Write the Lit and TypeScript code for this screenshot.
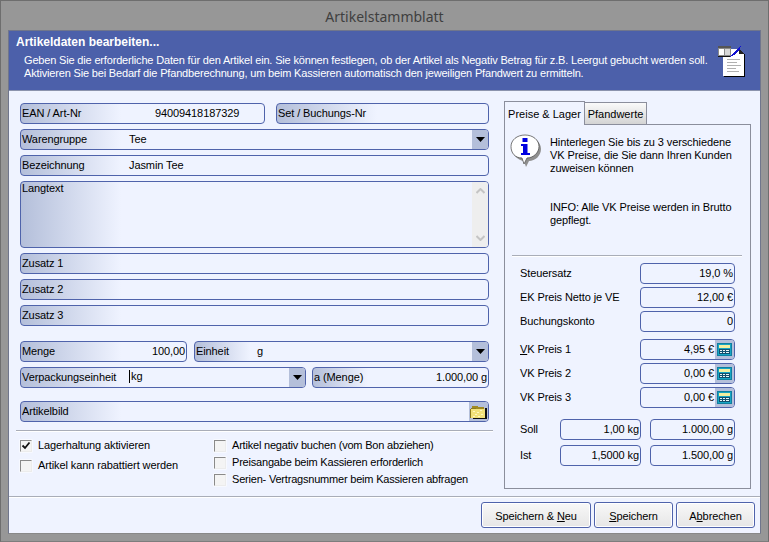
import { LitElement, html, css, svg } from "lit";
import { customElement } from "lit/decorators.js";

const caret = html`<span class="dd"><svg width="9" height="5" viewBox="0 0 9 5"><path d="M0 0h9L4.5 5z" fill="#000"/></svg></span>`;

const calc = html`<span class="btnicon"><svg width="15" height="13" viewBox="0 0 15 13" shape-rendering="crispEdges">
  <rect x="0" y="0" width="15" height="13" fill="#0f7f9f"/>
  <rect x="1" y="1" width="13" height="11" fill="#17a5c4"/>
  <rect x="2" y="2" width="11" height="3" fill="#f4f0a0"/>
  <rect x="2" y="6" width="11" height="5" fill="#12506e"/>
  <path d="M3 7h2v1H3zM6 7h2v1H6zM9 7h3v1H9zM3 9h2v1H3zM6 9h2v1H6zM9 9h3v1H9z" fill="#e8f4f4"/>
</svg></span>`;

const folder = html`<span class="btnicon"><svg width="17" height="14" viewBox="0 0 17 14" shape-rendering="crispEdges">
  <path d="M2 1h5l1 1h6v4H2z" fill="#a08a20"/>
  <path d="M1 4h14v9H1z" fill="#f2e27a"/>
  <path d="M0 4h1v9H0zM1 3h5v1H1z" fill="#8a7a1c"/>
  <path d="M3 6h2v1H3zM7 7h2v1H7zM10 5h2v1h-2zM5 9h2v1H5zM11 9h2v1h-2zM3 11h2v1H3zM8 11h2v1H8z" fill="#fff8c0"/>
  <path d="M15 3h2v11H3v-1h12z" fill="#111"/>
</svg></span>`;

const info = svg`<svg class="infoicon" width="32" height="33" viewBox="0 0 32 33">
  <path d="M17 3c8 0 14 5 14 12s-6 12-12 12l-3 6-2-6C7 26 3 21 3 15S9 3 17 3z" fill="#8f8f8f"/>
  <path d="M15 1c8 0 14 5 14 11.500S23 24 17 24l-3 6-2-6C5 24 1 19 1 12.500S7 1 15 1z" fill="#fff" stroke="#555" stroke-width="0.8"/>
  <rect x="12.500" y="4" width="5" height="4" fill="#0000e0"/>
  <path d="M11 10h6.500v9H20v2h-9v-2h2v-7h-2z" fill="#0000e0"/>
</svg>`;

const doc = svg`<svg width="30" height="32" viewBox="0 0 30 32" shape-rendering="crispEdges">
  <path d="M6 5h16l5 5v22H6z" fill="#000"/>
  <path d="M5 4h16l5 5v22H5z" fill="#fff"/>
  <path d="M21 4h1v1h1v1h1v1h1v1h1v1h-5z" fill="#222"/>
  <path d="M9 14h13v1H9zM9 17h10v1H9zM9 20h14v1H9zM9 23h9v1H9zM9 26h12v1H9z" fill="#b0b0b0"/>
  <rect x="0" y="1" width="13" height="11" fill="#8a8a8a"/>
  <rect x="0" y="1" width="13" height="2" fill="#555"/>
  <rect x="1" y="4" width="5" height="6" fill="#fff"/>
  <rect x="7" y="4" width="5" height="6" fill="#d8d8d8"/>
  <rect x="0" y="11" width="13" height="1" fill="#111"/>
  <path d="M12 11l2-1 1-2 2-2 2-2 2-2 2-1-1 3-2 2-2 2-2 2-2 1-2 1z" fill="#1010d0"/>
</svg>`;

@customElement("app-root")
export class AppRoot extends LitElement {
  static styles = css`
    :host { display: block; width: 769px; height: 542px; box-sizing: border-box; background: #979797;
      border: 1px solid #6e6e6e; border-bottom-color: #7d7d7d; font: 11px "Liberation Sans", Arial, sans-serif; letter-spacing: -.1px; color: #000; overflow: hidden; }
    .title { height: 29px; display: flex; align-items: center; justify-content: center; font: 14px "Noto Sans", sans-serif; letter-spacing: 0; color: #3f3f3f; padding-top: 1px; box-sizing: border-box; }
    .win { margin: 0 7px; height: 504px; box-sizing: border-box; background: #eff3ff; border: 1px solid #70768c; border-bottom-color: #888; display: flex; flex-direction: column; }
    .head { height: 60px; flex: none; box-sizing: border-box; background: #4c60aa; border-bottom: 1px solid #8b93ad; color: #fff; position: relative; padding: 4px 0 0 7px; }
    .head b { display: block; line-height: 14px; font-size: 12px; letter-spacing: 0; }
    .head p { margin: 5px 0 0 8px; line-height: 13px; white-space: nowrap; letter-spacing: -.17px; }
    .head .ic { position: absolute; right: 12px; top: 14px; display: block; }
    .main { flex: 1; display: flex; padding: 12px 0 0 11px; min-height: 0; }
    .left { width: 469px; display: flex; flex-direction: column; gap: 5px; flex: none; }
    .row { display: flex; justify-content: space-between; }
    .mt10 { margin-top: 10px; }
    .mt8 { margin-top: 8px; }
    .f { height: 21px; box-sizing: border-box; display: flex; align-items: center; border: 1px solid #4f63ab; border-radius: 4px; background: linear-gradient(90deg, #b4bfda 0, #eff3ff 100px) no-repeat; overflow: hidden; white-space: nowrap; flex: none; }
    .f.short { background-image: linear-gradient(90deg, #b4bfda 0, #eff3ff 55px); }
    .f.plain { background: #eff3ff; justify-content: flex-end; }
    .w245 { width: 245px; }
    .w213 { width: 213px; }
    .w167 { width: 167px; }
    .w295 { width: 295px; }
    .w286 { width: 286px; }
    .w177 { width: 177px; }
    .lb { padding: 0 0 2px 1px; flex: none; }
    .val { flex: 1; padding-bottom: 2px; }
    .val.r { text-align: right; padding-right: 1px; }
    .dd { width: 16px; height: 100%; flex: none; background: #b4bfda; display: flex; align-items: center; justify-content: center; }
    .btnicon { width: 19px; height: 100%; flex: none; background: #b4bfda; display: flex; align-items: center; justify-content: center; }
    .lw { width: 107px; }
    .lw133 { width: 133px; }
    .lw61 { width: 61px; }
    .cursor { display: inline-block; width: 1px; height: 13px; background: #000; margin-right: 1px; vertical-align: -3px; }
    .long { height: 67px; align-items: flex-start; }
    .long .lb { padding: 0 0 0 1px; flex: 1; }
    .sb { width: 16px; height: 100%; background: #eeeeee; flex: none; display: flex; flex-direction: column; justify-content: space-between; align-items: center; padding: 6px 0 6px; box-sizing: border-box; }
    .sep { height: 1px; background: #a9adb8; margin: 3px -4px 0; border-bottom: 1px solid #fff; }
    .checks { display: flex; margin-top: 1px; }
    .c1 { width: 194px; flex: none; display: flex; flex-direction: column; gap: 7px; padding-top: 1px; }
    .c2 { display: flex; flex-direction: column; gap: 4px; padding-top: 1px; letter-spacing: -.2px; }
    .ck { display: flex; align-items: center; height: 13px; gap: 6px; white-space: nowrap; }
    .ck span:last-child { padding-bottom: 2px; }
    .box { width: 12px; height: 12px; box-sizing: border-box; flex: none; background: #f4f4f4; border: 1px solid; border-color: #8a8a8a #ececec #ececec #8a8a8a; box-shadow: 0 0 0 .5px #fff; display: block; }
    .box svg { display: block; }
    .right { width: 247px; margin-left: 15px; flex: none; display: flex; flex-direction: column; margin-top: -2px; }
    .tabs { display: flex; align-items: flex-end; height: 23px; flex: none; }
    .tab { box-sizing: border-box; display: flex; align-items: center; justify-content: center; border: 1px solid #8b8e9c; white-space: nowrap; letter-spacing: 0; }
    .tab.on { width: 81px; height: 24px; border-bottom: 0; background: #eff3ff; position: relative; z-index: 1; margin-bottom: -1px; }
    .tab.off { width: 62px; height: 22px; border-left: 0; border-bottom: 0; background: linear-gradient(#fafafa, #d4d4d4); padding-top: 1px; }
    .panel { height: 365px; box-sizing: border-box; border: 1px solid #8b8e9c; flex: none; padding: 9px 15px 0 5px; display: flex; flex-direction: column; }
    .intro { display: grid; grid-template-columns: 40px 1fr; height: 121px; flex: none; line-height: 13px; margin-right: -6px; }
    .intro p { margin: 0; }
    .intro p:first-child { margin-top: 2px; }
    .intro .gap { margin-top: 26px; }
    .line { height: 1px; background: #a9adb8; border-bottom: 1px solid #fff; margin: 0 -7px 6px 2px; flex: none; }
    .pr { display: flex; align-items: center; justify-content: space-between; height: 21px; padding-left: 10px; flex: none; }
    .pl { padding-bottom: 2px; }
    .stack { display: flex; flex-direction: column; gap: 3px; }
    .mt7 { margin-top: 7px; }
    .mt11 { margin-top: 11px; }
    .gap5 { gap: 5px; }
    .w95 { width: 95px; }
    .w81 { width: 81px; }
    .w85 { width: 85px; }
    .rr { display: flex; align-items: center; gap: 9px; }
    .grow { flex: 1; text-align: right; padding: 0 1px 2px 0; }
    u { text-decoration: underline; }
    .foot { height: 37px; flex: none; box-sizing: border-box; border-top: 1px solid #a9adb8; box-shadow: inset 0 1px 0 #fff; display: flex; justify-content: flex-end; gap: 3px; padding: 5px 5px 0 0; }
    .b { height: 26px; width: 79px; box-sizing: border-box; border: 1px solid #4f63ab; border-radius: 3px; background: linear-gradient(#f8f8f8, #e6e6e6); box-shadow: inset 0 0 0 1px #fff; display: flex; align-items: center; justify-content: center; white-space: nowrap; padding-top: 2px; }
    .b.wide { width: 110px; }
  `;

  private check(text: string, on = false) {
    return html`<div class="ck"><span class="box">${on
      ? html`<svg width="10" height="10" viewBox="0 0 10 10"><path d="M1.500 4.500 4 7l4.500-5.500" fill="none" stroke="#111" stroke-width="1.800"/></svg>`
      : ""}</span><span>${text}</span></div>`;
  }

  private pr(label: unknown, value: string, icon = false) {
    return html`<div class="pr"><span class="pl">${label}</span>
      <span class="f plain w95"><span class="grow">${value}</span>${icon ? calc : ""}</span></div>`;
  }

  render() {
    return html`
      <div class="title">Artikelstammblatt</div>
      <div class="win">
        <div class="head">
          <b>Artikeldaten bearbeiten...</b>
          <p>Geben Sie die erforderliche Daten für den Artikel ein. Sie können festlegen, ob der Artikel als Negativ Betrag für z.B. Leergut gebucht werden soll.<br>Aktivieren Sie bei Bedarf die Pfandberechnung, um beim Kassieren automatisch den jeweiligen Pfandwert zu ermitteln.</p>
          <span class="ic">${doc}</span>
        </div>
        <div class="main">
          <div class="left">
            <div class="row">
              <div class="f w245"><span class="lb lw133">EAN / Art-Nr</span><span class="val">94009418187329</span></div>
              <div class="f w213"><span class="lb">Set / Buchungs-Nr</span></div>
            </div>
            <div class="f"><span class="lb lw">Warengruppe</span><span class="val">Tee</span>${caret}</div>
            <div class="f"><span class="lb lw">Bezeichnung</span><span class="val">Jasmin Tee</span></div>
            <div class="f long"><span class="lb">Langtext</span>
              <span class="sb">
                <svg width="9" height="6" viewBox="0 0 9 6"><path d="M.5 5 4.500 1l4 4" fill="none" stroke="#c4c4c4" stroke-width="2"/></svg>
                <svg width="9" height="6" viewBox="0 0 9 6"><path d="M.5 1l4 4 4-4" fill="none" stroke="#c4c4c4" stroke-width="2"/></svg>
              </span>
            </div>
            <div class="f"><span class="lb">Zusatz 1</span></div>
            <div class="f"><span class="lb">Zusatz 2</span></div>
            <div class="f"><span class="lb">Zusatz 3</span></div>
            <div class="row mt10">
              <div class="f w167"><span class="lb">Menge</span><span class="val r">100,00</span></div>
              <div class="f short w295"><span class="lb lw61">Einheit</span><span class="val">g</span>${caret}</div>
            </div>
            <div class="row">
              <div class="f w286"><span class="lb lw">Verpackungseinheit</span><span class="val"><span class="cursor"></span>kg</span>${caret}</div>
              <div class="f short w177"><span class="lb">a (Menge)</span><span class="val r">1.000,00 g</span></div>
            </div>
            <div class="f mt8"><span class="lb val">Artikelbild</span>${folder}</div>
            <div class="sep"></div>
            <div class="checks">
              <div class="c1">${this.check("Lagerhaltung aktivieren", true)}${this.check("Artikel kann rabattiert werden")}</div>
              <div class="c2">${this.check("Artikel negativ buchen (vom Bon abziehen)")}${this.check("Preisangabe beim Kassieren erforderlich")}${this.check("Serien- Vertragsnummer beim Kassieren abfragen")}</div>
            </div>
          </div>
          <div class="right">
            <div class="tabs">
              <div class="tab on">Preise &amp; Lager</div>
              <div class="tab off">Pfandwerte</div>
            </div>
            <div class="panel">
              <div class="intro">
                ${info}
                <div>
                  <p>Hinterlegen Sie bis zu 3 verschiedene VK Preise, die Sie dann Ihren Kunden zuweisen können</p>
                  <p class="gap">INFO: Alle VK Preise werden in Brutto gepflegt.</p>
                </div>
              </div>
              <div class="line"></div>
              <div class="stack">
                ${this.pr("Steuersatz", "19,0 %")}
                ${this.pr("EK Preis Netto je VE", "12,00 €")}
                ${this.pr("Buchungskonto", "0")}
              </div>
              <div class="stack mt7">
                ${this.pr(html`<u>V</u>K Preis 1`, "4,95 €", true)}
                ${this.pr("VK Preis 2", "0,00 €", true)}
                ${this.pr("VK Preis 3", "0,00 €", true)}
              </div>
              <div class="stack mt11 gap5">
                <div class="pr"><span class="pl">Soll</span><span class="rr"><span class="f plain w81"><span class="grow">1,00 kg</span></span><span class="f plain w85"><span class="grow">1.000,00 g</span></span></span></div>
                <div class="pr"><span class="pl">Ist</span><span class="rr"><span class="f plain w81"><span class="grow">1,5000 kg</span></span><span class="f plain w85"><span class="grow">1.500,00 g</span></span></span></div>
              </div>
            </div>
          </div>
        </div>
        <div class="foot">
          <div class="b wide"><span>Speichern &amp; <u>N</u>eu</span></div>
          <div class="b"><span><u>S</u>peichern</span></div>
          <div class="b"><span>A<u>b</u>brechen</span></div>
        </div>
      </div>`;
  }
}
